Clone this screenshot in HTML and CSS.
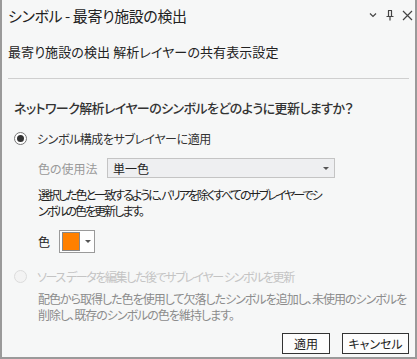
FILE: index.html
```html
<!DOCTYPE html>
<html lang="ja">
  <head>
    <meta charset="UTF-8" />
    <meta name="viewport" content="width=device-width, initial-scale=1.0" />
    <title>シンボル - 最寄り施設の検出</title>
    <link rel="stylesheet" href="styles.css">
  </head>

  <body>
    <div class="window">
      <div class="titlebar">
        <span class="title">シンボル - 最寄り施設の検出</span>
        <div class="tools">
          <svg width="10" height="10" viewBox="0 0 10 10">
            <path d="M2 3.5 L5 6.5 L8 3.5" fill="none" stroke="#444" stroke-width="1.2" />
          </svg>
          <svg width="10" height="12" viewBox="0 0 10 12">
            <path d="M3 1.5 H7 M3.5 1.5 V7 M6.5 1.5 V7 M1.5 7.5 H8.5 M5 7.5 V11.5" fill="none" stroke="#444" stroke-width="1.2" />
          </svg>
          <svg width="11" height="11" viewBox="0 0 11 11">
            <path d="M1 1 L10 10 M10 1 L1 10" fill="none" stroke="#444" stroke-width="1.2" />
          </svg>
        </div>
      </div>

      <div class="subtitle">最寄り施設の検出 解析レイヤーの共有表示設定</div>
      <div class="separator"></div>

      <div class="content">
        <div class="question">ネットワーク解析レイヤーのシンボルをどのように更新しますか？</div>

        <div class="option">
          <span class="radio checked"></span>
          <span class="loose">シンボル構成をサブレイヤーに適用</span>
        </div>

        <div class="indent">
          <div class="field">
            <span class="field-label">色の使用法</span>
            <div class="select">
              <span>単一色</span>
              <span class="caret"></span>
            </div>
          </div>
          <p class="desc narrow">選択した色と一致するように、バリアを除くすべてのサブレイヤーでシ<br />ンボルの色を更新します。</p>
          <div class="color-row">
            <span>色</span>
            <div class="color-btn">
              <span class="swatch"></span>
              <span class="caret"></span>
            </div>
          </div>
        </div>

        <div class="option disabled">
          <span class="radio"></span>
          <span class="tight">ソース データを編集した後でサブレイヤー シンボルを更新</span>
        </div>
        <div class="indent">
          <p class="desc muted">配色から取得した色を使用して欠落したシンボルを追加し、未使用のシンボルを<br />削除し、既存のシンボルの色を維持します。</p>
        </div>
      </div>

      <div class="buttons">
        <button class="btn">適用</button>
        <button class="btn">キャンセル</button>
      </div>
    </div>
  </body>
</html>
```

FILE: styles.css
```css
body {
  margin: 0;
  background-color: #f6f7f7;
  font-family: "Noto Sans CJK JP", "Noto Sans", sans-serif;
  font-feature-settings: "palt";
  color: #222;
}

.window {
  width: 417px;
  height: 359px;
  box-sizing: border-box;
  border-left: 2px solid #9a9a9a;
  border-right: 2px solid #9a9a9a;
  border-bottom: 2px solid #9a9a9a;
}

.titlebar {
  display: flex;
  align-items: center;
  height: 30px;
  padding: 0 2px 0 6px;
}

.title {
  font-size: 15px;
  letter-spacing: -0.4px;
  flex: 1;
  color: #222;
}

.tools {
  display: flex;
  align-items: center;
  gap: 7px;
}

.subtitle {
  font-size: 13px;
  letter-spacing: 0.1px;
  line-height: 20px;
  margin-top: 12px;
  padding-left: 6px;
  color: #222;
}

.separator {
  border-top: 1px solid #cfcfcf;
  margin: 16px 6px 0 6px;
}

.content {
  padding-left: 12px;
}

.question {
  font-size: 13px;
  letter-spacing: -0.6px;
  line-height: 20px;
  margin-top: 19px;
  font-weight: 500;
  color: #333;
}

.option {
  display: flex;
  align-items: center;
  height: 20px;
  margin-top: 10px;
  font-size: 12px;
  color: #333;
}

.option.disabled {
  margin-top: 13px;
  color: #c4c4c4;
}

.loose {
  letter-spacing: -0.45px;
}

.tight {
  letter-spacing: -1.4px;
}

.radio {
  width: 11px;
  height: 11px;
  border: 1px solid #777;
  border-radius: 50%;
  background: #fff;
  margin-right: 10px;
  position: relative;
}

.radio.checked:after {
  content: "";
  position: absolute;
  left: 2px;
  top: 2px;
  width: 7px;
  height: 7px;
  border-radius: 50%;
  background: #333;
}

.option.disabled .radio {
  border-color: #dcdcdc;
  background: #f3f3f3;
}

.indent {
  padding-left: 24px;
}

.field {
  display: flex;
  align-items: center;
  margin-top: 10px;
  font-size: 12px;
}

.field-label {
  width: 69px;
  color: #999;
}

.select {
  display: flex;
  align-items: center;
  justify-content: space-between;
  width: 228px;
  height: 20px;
  box-sizing: border-box;
  border: 1px solid #c4c4c4;
  background: #eeeff1;
  padding: 0 5px 0 5px;
}

.caret {
  width: 0;
  height: 0;
  border-left: 3px solid transparent;
  border-right: 3px solid transparent;
  border-top: 3px solid #555;
}

.desc {
  margin: 8px 0 0 0;
  font-size: 12px;
  letter-spacing: -1px;
  line-height: 16px;
}

.desc.narrow {
  margin-top: 9px;
  letter-spacing: -2px;
}

.desc.muted {
  margin-top: 5px;
  color: #8c8c8c;
}

.color-row {
  display: flex;
  align-items: center;
  gap: 9px;
  margin-top: 11px;
  font-size: 12px;
}

.color-btn {
  display: flex;
  align-items: center;
  width: 36px;
  height: 23px;
  box-sizing: border-box;
  border: 1px solid #9a9a9a;
  background: #fff;
  padding-left: 2px;
  gap: 5px;
}

.swatch {
  width: 16px;
  height: 17px;
  background: #ff8000;
  border: 1px solid #888;
}

.buttons {
  display: flex;
  justify-content: flex-end;
  gap: 12px;
  margin-top: 10px;
  padding-right: 6px;
}

.btn {
  height: 21px;
  border: 1px solid #333;
  background: #fdfdfd;
  font-family: inherit;
  font-feature-settings: "palt";
  font-size: 12px;
  color: #222;
  padding: 0;
}

.btn:first-child {
  width: 48px;
}

.btn:last-child {
  width: 67px;
}
```
